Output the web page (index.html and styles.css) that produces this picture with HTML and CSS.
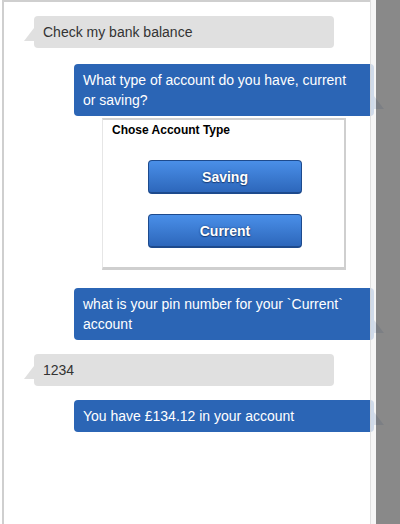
FILE: index.html
```html
<!DOCTYPE html>
<html>
<head>
<meta charset="utf-8">
<link rel="stylesheet" href="styles.css">
</head>
<body>
<div class="panel">
  <div class="msg user">Check my bank balance</div>
  <div class="msg bot">What type of account do you have, current or saving?</div>
  <div class="card">
    <div class="card-title">Chose Account Type</div>
    <div class="card-actions">
      <button class="btn">Saving</button>
      <button class="btn">Current</button>
    </div>
  </div>
  <div class="msg bot after-card">what is your pin number for your `Current` account</div>
  <div class="msg user">1234</div>
  <div class="msg bot tight">You have £134.12 in your account</div>
</div>
<div class="strip"></div>
<div class="shade"></div>
</body>
</html>
```
FILE: styles.css
```css
html, body {
  margin: 0;
  padding: 0;
  background: #fff;
  height: 524px;
  overflow: hidden;
}
body {
  position: relative;
  font-family: "Liberation Sans", Arial, sans-serif;
}
.panel {
  margin-left: 2px;
  width: 366px;
  height: 522px;
  border-left: 2px solid #cfcfcf;
  border-top: 2px solid #cfcfcf;
  display: flex;
  flex-direction: column;
  align-items: flex-start;
}
.msg {
  position: relative;
  box-sizing: border-box;
  width: 300px;
  padding: 6px 20px 6px 9px;
  font-size: 14px;
  line-height: 20px;
  border-radius: 4px;
}
.msg.user {
  margin: 14px 0 0 30px;
  background: #e0e0e0;
  color: #333;
}
.msg.user::before {
  content: "";
  position: absolute;
  left: -10px;
  bottom: 7px;
  border-right: 10px solid #e0e0e0;
  border-top: 13px solid transparent;
}
.msg.bot {
  margin: 16px 0 0 70px;
  background: #2b65b5;
  color: #fff;
}
.msg.bot::after {
  content: "";
  position: absolute;
  right: -10px;
  bottom: 7px;
  border-left: 10px solid #5b7fb8;
  border-top: 13px solid transparent;
}
.msg.bot.after-card { margin-top: 18px; }
.msg.bot.tight { margin-top: 14px; }
.card {
  box-sizing: border-box;
  margin: 2px 0 0 98px;
  width: 244px;
  height: 152px;
  border-top: 2px solid #d0d0d0;
  border-left: 1px solid #e6e6e6;
  border-right: 2px solid #cfcfcf;
  border-bottom: 3px solid #cfcfcf;
  padding: 3px 0 0 9px;
}
.card-title {
  font-size: 12px;
  font-weight: bold;
  line-height: 14px;
  color: #000;
}
.card-actions {
  display: flex;
  flex-direction: column;
  gap: 20px;
  margin: 23px 0 0 36px;
}
.btn {
  box-sizing: border-box;
  width: 154px;
  height: 34px;
  border: 1px solid #1d4a8d;
  border-bottom-width: 2px;
  border-radius: 4px;
  background: linear-gradient(#4a8fe8, #2d67bb);
  color: #fff;
  font-family: "Liberation Sans", Arial, sans-serif;
  font-size: 14px;
  font-weight: bold;
  text-shadow: 0 0 2px #1a3f7a, 0 1px 1px #1a3f7a;
  padding: 0;
}
.strip {
  position: absolute;
  left: 370px;
  top: 0;
  width: 6px;
  height: 524px;
  background: rgba(244, 244, 244, 0.82);
  border-left: 1px solid rgba(210, 210, 210, 0.6);
  box-sizing: border-box;
}
.shade {
  position: absolute;
  left: 376px;
  top: 0;
  right: 0;
  height: 524px;
  background: rgba(127, 127, 127, 0.92);
}
```
